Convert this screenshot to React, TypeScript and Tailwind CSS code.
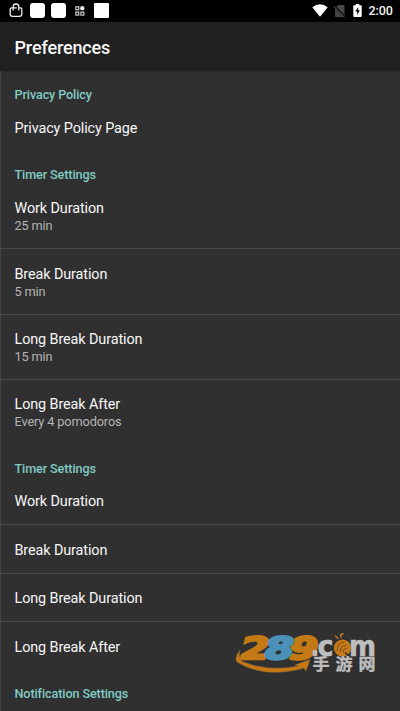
import React from "react";

type Item = { title: string; summary?: string };
type Section = { heading: string; pad: string; rowPad: string; items: Item[] };

const sections: Section[] = [
  { heading: "Privacy Policy", pad: "pt-[12.5px]", rowPad: "pt-[1.6px]", items: [{ title: "Privacy Policy Page" }] },
  {
    heading: "Timer Settings",
    pad: "pt-[13.5px]",
    rowPad: "pt-[16.2px]",
    items: [
      { title: "Work Duration", summary: "25 min" },
      { title: "Break Duration", summary: "5 min" },
      { title: "Long Break Duration", summary: "15 min" },
      { title: "Long Break After", summary: "Every 4 pomodoros" },
    ],
  },
  {
    heading: "Timer Settings",
    pad: "pt-[14px]",
    rowPad: "pt-[3.8px]",
    items: [
      { title: "Work Duration" },
      { title: "Break Duration" },
      { title: "Long Break Duration" },
      { title: "Long Break After" },
    ],
  },
  { heading: "Notification Settings", pad: "pt-[14.6px]", rowPad: "", items: [] },
];

function StatusBar() {
  return (
    <div className="flex h-[21.5px] shrink-0 items-center justify-between bg-black pl-[9px] pr-[7px]">
      <div className="flex items-center">
        <svg className="h-[15px] w-[14px]" viewBox="0 0 14 15" fill="none" stroke="#eee" strokeWidth="1.3">
          <path d="M4.2 4.8H2.4Q1.2 4.8 1.2 6v5q0 2.4 2.4 2.4h6.8q2.4 0 2.4-2.4V6q0-1.2-1.2-1.2H9.8M4.2 7.4V3.8a2.8 2.8 0 0 1 5.6 0v3.6M4.2 4.8h3.6" />
        </svg>
        <div className="ml-[7px] h-[15px] w-[15px] rounded-[3px] bg-white" />
        <div className="ml-[6px] h-[15px] w-[15px] rounded-[3px] bg-white" />
        <svg className="ml-[9px] h-[10px] w-[10px]" viewBox="0 0 10 10" fill="none" stroke="#ddd" strokeWidth="1.1">
          <rect x=".8" y=".8" width="3" height="3" />
          <circle cx="7.3" cy="2.3" r="1.7" fill="#fff" />
          <rect x=".8" y="6.1" width="3" height="3" />
          <rect x="5.9" y="6.1" width="3" height="3" />
        </svg>
        <div className="ml-[9px] h-[15px] w-[15px] rounded-[1px] bg-white" />
      </div>
      <div className="flex items-center">
        <svg className="h-[13px] w-[16px]" viewBox="0 0 16 13">
          <path d="M.3 3.2Q8-2.8 15.7 3.2L8 12.7Z" fill="#fff" />
        </svg>
        <svg className="ml-[5px] h-[14px] w-[13px]" viewBox="0 0 13 14">
          <path d="M5 1h5.5q1 0 1 1v10q0 1-1 1H3q-1 0-1-1V4Z" fill="#484848" />
          <path d="M.4 1.5 12 13.5" stroke="#000" strokeWidth="2.2" />
          <path d="M.6 2.3 11.6 13.5" stroke="#666" strokeWidth="1" />
        </svg>
        <svg className="ml-[7px] h-[13px] w-[9px]" viewBox="0 0 9 13">
          <path d="M2.8 0h3.4v1.2h1.6q.9 0 .9.9v10q0 .9-.9.9H1.2q-.9 0-.9-.9v-10q0-.9.9-.9h1.6Z" fill="#fff" />
          <path d="M5.2 3 2.3 7.5h1.9v3.4l2.6-4.7H5.1Z" fill="#000" />
        </svg>
        <span className="ml-[6.5px] w-[24.5px] whitespace-nowrap text-[12.5px] font-medium leading-[15px] tracking-[-0.1px] text-[#f2f2f2]">
          2:00
        </span>
      </div>
    </div>
  );
}

function PreferenceRow({ item, pad, divided }: { item: Item; pad: string; divided: boolean }) {
  const line = divided ? "border-b border-[#484848]" : "";
  if (item.summary) {
    return (
      <div className={`h-[65.4px] shrink-0 pl-[14.5px] ${pad} ${line}`}>
        <div className="text-[14.4px] leading-[18px] tracking-[-0.1px] text-[#f7f7f7]">{item.title}</div>
        <div className="text-[12.73px] leading-[16px] tracking-[-0.12px] text-[#b5b5b5]">{item.summary}</div>
      </div>
    );
  }
  return (
    <div
      className={`flex h-[48.4px] shrink-0 items-center pl-[14.5px] text-[14.4px] leading-[18px] tracking-[-0.1px] text-[#f7f7f7] ${pad} ${line}`}
    >
      {item.title}
    </div>
  );
}

function Watermark() {
  return (
    <svg
      className="absolute left-[234px] top-[632px] h-[44px] w-[146px] overflow-visible"
      viewBox="0 0 146 44"
      role="img"
      aria-label="289.com 手游网"
    >
      <g
        fontFamily="'DejaVu Sans', sans-serif"
        fontWeight="700"
        fontSize="30.5"
        strokeWidth="2.6"
        strokeLinejoin="miter"
        transform="translate(4 27.3) skewX(-14)"
      >
        <text x="0" y="0" textLength="29" lengthAdjust="spacingAndGlyphs" fill="#c37a14" stroke="#c37a14">2</text>
        <text x="48.5" y="0" textLength="29" lengthAdjust="spacingAndGlyphs" fill="#c37a14" stroke="#c37a14">9</text>
        <text x="24.2" y="0" textLength="29" lengthAdjust="spacingAndGlyphs" fill="#4b91b7" stroke="#4b91b7">8</text>
      </g>
      <path
        d="M6 18Q0 26 3 30Q31 47 70 36l2 3L76 27.5 61 33l4 1Q34 40 8 29.5Q4 26 6 18Z"
        fill="#c97810"
        stroke="#8b7048"
        strokeWidth=".5"
      />
      <g fontFamily="'DejaVu Sans', sans-serif" fontWeight="700" fontSize="28.5" fill="#bebebe" stroke="#bebebe" strokeWidth=".7">
        <text x="77" y="24" textLength="8" lengthAdjust="spacingAndGlyphs">.</text>
        <text x="83.5" y="24" textLength="16" lengthAdjust="spacingAndGlyphs">c</text>
        <text x="115" y="24" textLength="27" lengthAdjust="spacingAndGlyphs">m</text>
      </g>
      <circle cx="108.5" cy="16" r="8.6" fill="#c77a17" />
      <path d="M104 6.5 101.5 4M107 5.5l-.5-2.5 2.5-1.2" fill="none" stroke="#ba741d" strokeWidth="1.5" strokeLinecap="round" />
      <path d="M103.5 19q-1-8 7-9M106.5 20q-1-6 6-7M109.5 20.5q-1-4 4-4.5" fill="none" stroke="#6b4a20" strokeWidth=".9" />
      <path d="m111 20.5 5 4.5" stroke="#303030" strokeWidth="1.6" />
      <g
        fontFamily="'Noto Sans CJK SC', sans-serif"
        fontWeight="700"
        fontSize="16"
        fill="#bdbdbd"
        stroke="#bdbdbd"
        strokeWidth=".4"
      >
        <text x="78.5" y="38" textLength="17" lengthAdjust="spacingAndGlyphs">手</text>
        <text x="101.5" y="38" textLength="17" lengthAdjust="spacingAndGlyphs">游</text>
        <text x="124.5" y="38" textLength="17" lengthAdjust="spacingAndGlyphs">网</text>
      </g>
    </svg>
  );
}

export default function App() {
  return (
    <div className="relative flex h-[711px] w-[400px] flex-col overflow-hidden bg-[#303030] font-[Roboto,'Noto_Sans_CJK_SC',sans-serif]">
      <StatusBar />
      <header className="flex h-[49.5px] shrink-0 items-center bg-[#212121] pl-[14.5px] pt-[2px] text-[18px] font-medium tracking-[-0.14px] text-[#f7f7f7]">
        Preferences
      </header>
      <main className="flex min-h-0 grow flex-col border-l border-[#464646]">
        <div className="h-[2px] shrink-0 bg-linear-to-b from-[#272727] to-[#2e2e2e]" />
        <div className="-ml-px flex flex-col">
          {sections.map((section, s) => (
            <section key={s} className="flex flex-col">
              <h2
                className={`h-[31.3px] shrink-0 pl-[14.5px] text-[12.6px] font-medium leading-[17px] tracking-[-0.1px] text-[#80cbc4] ${section.pad}`}
              >
                {section.heading}
              </h2>
              {section.items.map((item, i) => (
                <PreferenceRow
                  key={item.title}
                  item={item}
                  pad={section.rowPad}
                  divided={i < section.items.length - 1}
                />
              ))}
            </section>
          ))}
        </div>
      </main>
      <Watermark />
    </div>
  );
}
